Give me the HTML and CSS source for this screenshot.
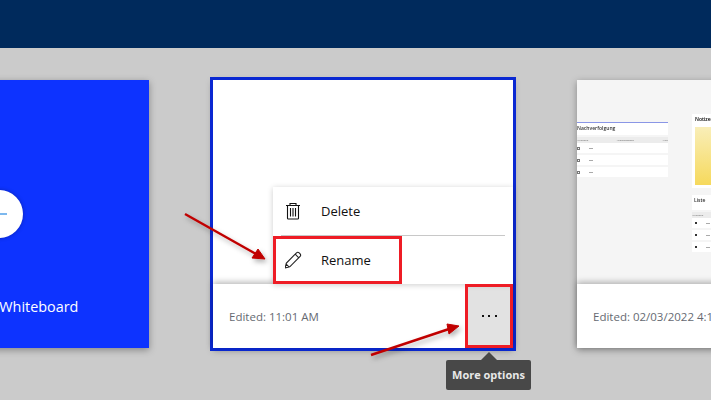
FILE: index.html
```html
<!DOCTYPE html>
<html lang="en">
<head>
<meta charset="utf-8">
<title>Whiteboards</title>
<link rel="stylesheet" href="styles.css">
</head>
<body>
<header class="topbar"></header>
<main class="board-row">
  <section class="card card-new">
    <div class="new-circle">
      <svg class="plus" width="16" height="16" viewBox="0 0 16 16"><path d="M0 8H16M8 0V16" stroke="#7db8ee" stroke-width="2"/></svg>
    </div>
    <div class="new-label">Create new Whiteboard</div>
  </section>

  <section class="card card-selected">
    <div class="thumb thumb-blank">
      <div class="menu">
        <div class="menu-item">
          <svg class="menu-icon" width="18" height="18" viewBox="0 0 18 18" fill="none" stroke="#111" stroke-width="1.1"><path d="M1 3.500H15M5 3.500V1.500H11V3.500M2.500 3.500V16.200Q2.500 17 3.300 17H12.700Q13.500 17 13.500 16.200V3.500M5.500 6V14.500M8 6V14.500M10.500 6V14.500"/></svg>
          <span>Delete</span>
        </div>
        <div class="menu-sep"></div>
        <div class="menu-item">
          <svg class="menu-icon" width="18" height="18" viewBox="1 0 18 18" fill="none" stroke="#222" stroke-width="1.1"><path d="M1 17L2.400 12L12.500 1.800Q13.800 .7 15.200 1.900L16.100 2.800Q17.200 4.200 16.100 5.500L6 15.600ZM1 17L2.100 13L5 15.900ZM11.200 3.200L14.800 6.800"/></svg>
          <span>Rename</span>
        </div>
      </div>
    </div>
    <div class="card-foot">
      <span class="edited">Edited: 11:01 AM</span>
      <button class="more" type="button"><i></i><i></i><i></i></button>
    </div>
  </section>

  <section class="card">
    <div class="thumb thumb-doc">
      <div class="doc-col doc-col-a">
        <div class="doc-panel">
          <div class="doc-title doc-title-line">Nachverfolgung</div>
          <div class="doc-head"><span>Aufgaben</span><span>Abgeschlossen</span><span>Alter</span></div>
          <div class="doc-row"><b class="box"></b><s></s></div>
          <div class="doc-row"><b class="box"></b><s></s></div>
          <div class="doc-row"><b class="box"></b><s></s></div>
        </div>
      </div>
      <div class="doc-col doc-col-b">
        <div class="note">
          <div class="doc-title">Notizen</div>
          <div class="note-fill"></div>
        </div>
        <div class="doc-panel">
          <div class="doc-title doc-title-tall">Liste</div>
          <div class="doc-head"><span>Aufgaben</span></div>
          <div class="doc-row"><b class="dot"></b><s></s></div>
          <div class="doc-row"><b class="dot"></b><s></s></div>
          <div class="doc-row"><b class="dot"></b><s></s></div>
        </div>
      </div>
    </div>
    <div class="card-foot">
      <span class="edited">Edited: 02/03/2022 4:15 PM</span>
    </div>
  </section>
</main>

<div class="mark mark-rename"></div>
<div class="mark mark-more"></div>

<svg class="arrows" width="711" height="400" viewBox="0 0 711 400">
  <defs>
    <filter id="soft" x="-20%" y="-20%" width="150%" height="150%"><feDropShadow dx="2" dy="3" stdDeviation="2.500" flood-color="#000" flood-opacity=".3"/></filter>
  </defs>
  <g fill="#c00000" stroke="#c00000" filter="url(#soft)">
    <path d="M185 214L256 254" stroke-width="2.500" fill="none"/>
    <path d="M265 259L252 258L258 249Z" stroke-width="1"/>
    <path d="M371 355L449 329" stroke-width="2.500" fill="none"/>
    <path d="M459 326L447 324L449 334Z" stroke-width="1"/>
  </g>
</svg>

<div class="tooltip">More options</div>
</body>
</html>
```

FILE: styles.css
```css
* { box-sizing: border-box; }

html, body {
  margin: 0;
  height: 100%;
}

body {
  position: relative;
  width: 711px;
  height: 400px;
  overflow: hidden;
  background: #cbcbcb;
  font-family: "Open Sans", "Noto Sans", "Liberation Sans", sans-serif;
}

.topbar {
  height: 48px;
  background: #002a5c;
}

.board-row {
  display: flex;
  gap: 64px;
  margin-left: -151px;
  padding-top: 32px;
}

.card {
  flex: 0 0 300px;
  height: 268px;
  display: flex;
  flex-direction: column;
  background: #fff;
  box-shadow: 0 2px 7px rgba(0, 0, 0, .35);
}

.card-new {
  align-items: center;
  background: #0d33ff;
  color: #fff;
  padding-top: 110px;
}

.new-circle {
  width: 48px;
  height: 48px;
  border-radius: 50%;
  background: #fff;
  display: flex;
  align-items: center;
  justify-content: center;
  box-shadow: 0 0 4px rgba(0, 0, 0, .3);
}

.new-label {
  margin-top: 59px;
  font-size: 14.400px;
  line-height: 20px;
  white-space: nowrap;
}

.card-selected {
  outline: 3px solid #0a28d2;
}

.thumb {
  height: 204px;
  position: relative;
}

.thumb-blank {
  background: #fff;
}

.menu {
  position: absolute;
  right: 0;
  bottom: 0;
  width: 240px;
  height: 97px;
  background: #fff;
  box-shadow: 0 1px 6px rgba(0, 0, 0, .2);
  z-index: 2;
  display: flex;
  flex-direction: column;
}

.menu-item {
  flex: 1;
  display: flex;
  align-items: center;
  padding-left: 12px;
  font-size: 13px;
  color: #111;
}

.menu-icon {
  width: 18px;
  margin-right: 18px;
}

.menu-sep {
  height: 1px;
  margin: 0 8px;
  background: #c8c8c8;
}

.card-foot {
  height: 64px;
  display: flex;
  align-items: center;
  justify-content: space-between;
  padding-left: 16px;
  background: #fff;
  position: relative;
  box-shadow: 0 -2px 6px rgba(0, 0, 0, .28);
  white-space: nowrap;
}

.edited {
  font-size: 11.500px;
  color: #666a72;
}

.more {
  width: 48px;
  height: 64px;
  border: 0;
  padding: 0;
  background: #e2e2e2;
  display: flex;
  align-items: center;
  justify-content: center;
  gap: 4.500px;
}

.more i {
  width: 2px;
  height: 2px;
  background: #111;
}

.thumb-doc {
  display: flex;
  gap: 24px;
  background: #f5f5f5;
  overflow: hidden;
}

.doc-col {
  filter: blur(.6px);
}

.doc-col-a {
  flex: 0 0 91px;
  padding-top: 42px;
}

.doc-col-b {
  flex: 0 0 120px;
  padding-top: 34px;
}

.doc-panel {
  color: #333;
}

.doc-title {
  height: 13px;
  background: #fff;
  font-size: 5px;
  line-height: 11px;
  font-weight: 600;
}

.doc-title-line {
  border-top: 1px solid #8a96e6;
}

.doc-title-tall {
  height: 15px;
  padding-left: 2px;
  line-height: 11px;
}

.doc-head {
  display: flex;
  justify-content: space-between;
  height: 6px;
  margin-top: 2px;
  background: #ececec;
  font-size: 2.500px;
  line-height: 6px;
  color: #666;
}

.doc-row {
  height: 10px;
  margin-bottom: 2px;
  background: #fff;
  display: flex;
  align-items: center;
  gap: 9px;
}

.doc-row s {
  width: 4px;
  height: 1px;
  background: #aaa;
}

.box {
  width: 3px;
  height: 3px;
  border: 1px solid #777;
}

.dot {
  width: 2px;
  height: 2px;
  margin-left: 3px;
  background: #333;
}

.note {
  height: 74px;
  padding: 0 0 3px;
  margin-bottom: 7px;
  background: #fff;
  display: flex;
  flex-direction: column;
}

.note .doc-title {
  padding-left: 3px;
}

.note-fill {
  flex: 1;
  margin-left: 3px;
  background: linear-gradient(#f9eeb8, #f6d95c);
}

.mark {
  position: absolute;
  border: 3px solid #ee1c25;
  z-index: 3;
}

.mark-rename {
  left: 273px;
  top: 236px;
  width: 129px;
  height: 48px;
}

.mark-more {
  left: 465px;
  top: 284px;
  width: 48px;
  height: 64px;
}

.arrows {
  position: absolute;
  left: 0;
  top: 0;
  z-index: 4;
  pointer-events: none;
}

.tooltip {
  position: absolute;
  left: 446px;
  top: 360px;
  width: 85px;
  height: 30px;
  background: #484848;
  border-radius: 2px;
  color: #e8e8e8;
  font-size: 11px;
  font-weight: 700;
  line-height: 30px;
  text-align: center;
  white-space: nowrap;
  z-index: 5;
}

.tooltip::before {
  content: "";
  position: absolute;
  left: 35px;
  top: -8px;
  border: 8px solid transparent;
  border-top: 0;
  border-bottom-color: #484848;
}
```
